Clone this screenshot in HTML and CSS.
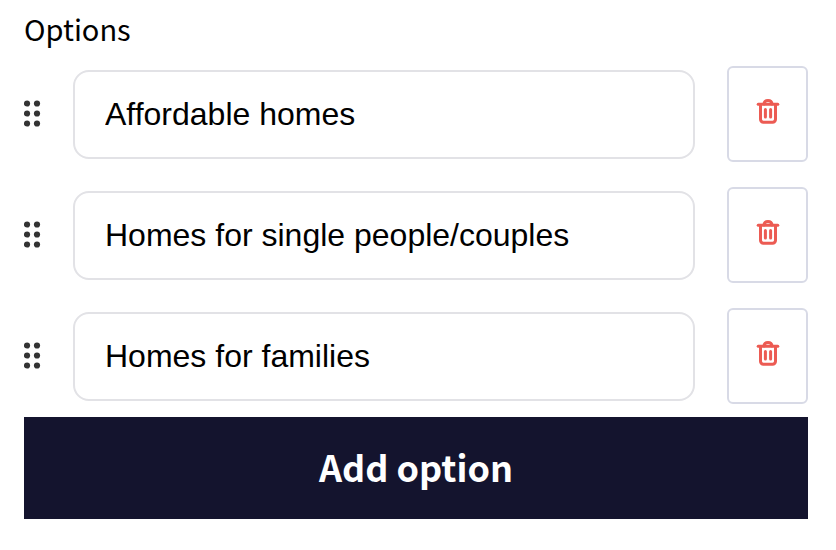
FILE: index.html
```html
<!DOCTYPE html>
<html lang="en">
<head>
    <meta charset="UTF-8">
    <meta name="viewport" content="width=device-width, initial-scale=1.0">
    <title>Options</title>
    <link rel="stylesheet" href="styles.css">
</head>
<body>
    <svg class="sprite" aria-hidden="true">
        <symbol id="grip" viewBox="0 0 17 28">
            <circle cx="3" cy="3.500" r="3.100" />
            <circle cx="13" cy="3.500" r="3.100" />
            <circle cx="3" cy="13.500" r="3.100" />
            <circle cx="13" cy="13.500" r="3.100" />
            <circle cx="3" cy="23.500" r="3.100" />
            <circle cx="13" cy="23.500" r="3.100" />
        </symbol>
        <symbol id="trash" viewBox="0 0 24 26">
            <path d="M2.2 6.3h19.6" />
            <path d="M4.5 6.800v14.500a2.900 2.900 0 0 0 2.900 2.900h9.200a2.900 2.900 0 0 0 2.900-2.900V6.800" />
            <path d="M8 6c.2-2.300 1.700-3.500 4-3.500s3.800 1.200 4 3.500" />
            <path d="M9.400 11.500v7.500M14.600 11.500v7.500" />
        </symbol>
    </svg>

    <form class="options">
        <h2>Options</h2>
        <ul class="option-list">
            <li class="option">
                <svg class="grip"><use href="#grip" /></svg>
                <input type="text" value="Affordable homes" aria-label="Option 1">
                <button type="button" class="delete" aria-label="Delete option 1">
                    <svg><use href="#trash" /></svg>
                </button>
            </li>
            <li class="option">
                <svg class="grip"><use href="#grip" /></svg>
                <input type="text" value="Homes for single people/couples" aria-label="Option 2">
                <button type="button" class="delete" aria-label="Delete option 2">
                    <svg><use href="#trash" /></svg>
                </button>
            </li>
            <li class="option">
                <svg class="grip"><use href="#grip" /></svg>
                <input type="text" value="Homes for families" aria-label="Option 3">
                <button type="button" class="delete" aria-label="Delete option 3">
                    <svg><use href="#trash" /></svg>
                </button>
            </li>
        </ul>
        <button type="button" class="add">Add option</button>
    </form>
</body>
</html>
```

FILE: styles.css
```css
* {
    box-sizing: border-box;
    margin: 0;
    padding: 0;
}

body {
    font-family: "Noto Sans CJK JP", "Noto Sans", sans-serif;
    background: #fff;
    color: #000;
}

.sprite {
    display: none;
}

.options {
    padding: 8px 28px 24px 24px;
}

.options h2 {
    font-size: 29px;
    font-weight: 400;
    line-height: 40px;
    margin-bottom: 18px;
}

.option-list {
    list-style: none;
    display: flex;
    flex-direction: column;
    gap: 25px;
    margin-bottom: 13px;
}

.option {
    display: flex;
    align-items: center;
    gap: 32px;
}

.grip {
    flex: none;
    width: 17px;
    height: 28px;
    fill: #333;
}

.option input {
    flex: 1;
    min-width: 0;
    height: 89px;
    padding: 0 30px;
    border: 2px solid #e2e2e6;
    border-radius: 16px;
    background: #fff;
    color: #000;
    font-family: "Liberation Sans", Arial, sans-serif;
    font-size: 32px;
}

.delete {
    flex: none;
    display: flex;
    align-items: center;
    justify-content: center;
    width: 81px;
    height: 96px;
    padding-bottom: 6px;
    border: 2px solid #d8dae6;
    border-radius: 6px;
    background: #fff;
    cursor: pointer;
}

.delete svg {
    width: 24px;
    height: 26px;
    fill: none;
    stroke: #ec5b53;
    stroke-width: 3;
    stroke-linecap: round;
    stroke-linejoin: round;
}

.add {
    width: 100%;
    height: 102px;
    padding-bottom: 4px;
    border: none;
    background: #14142e;
    color: #fff;
    font-family: inherit;
    font-size: 36px;
    font-weight: 700;
    cursor: pointer;
}
```
